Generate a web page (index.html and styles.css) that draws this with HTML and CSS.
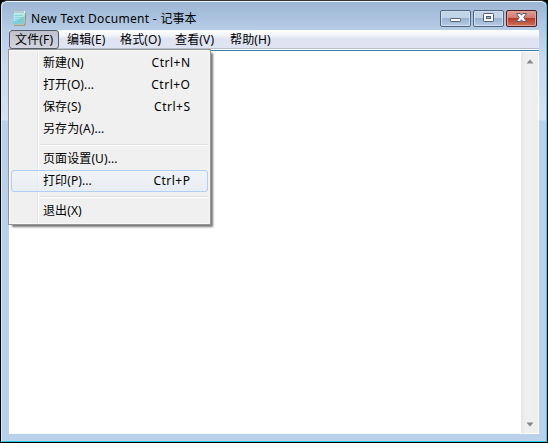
FILE: index.html
```
<!DOCTYPE html>
<html lang="zh-CN">
<head>
<meta charset="utf-8">
<title>New Text Document - 记事本</title>
<link rel="stylesheet" href="styles.css">
</head>
<body>
<main class="window">
  <header class="titlebar">
    <svg class="app-icon" width="15" height="16" viewBox="0 0 15 16">
      <path d="M3 3h11.2L13.5 15.5H2z" fill="#d9d2bd"/>
      <path d="M13.8 3L13 15.2H2" fill="none" stroke="#8a8370" stroke-width=".9"/>
      <path d="M2 2h11l-1 12H1z" fill="#7fcfd9"/>
      <path d="M2 2h11l-.4 4L1.5 12z" fill="#b5eaee"/>
      <path d="M3 5.5h8M3 7.5h8M2.5 9.5h8M2.5 11.5h8" stroke="#6fc3d0" stroke-width=".6"/>
      <path d="M2 2h11" stroke="#f5ffff" stroke-width="2"/>
      <path d="M3 1v2M5 1v2M7 1v2M9 1v2M11 1v2" stroke="#617e88" stroke-width=".8"/>
    </svg>
    <h1 class="title"><span class="title-en">New Text Document - </span>记事本</h1>
    <div class="controls">
      <span class="control"><svg width="29" height="15" viewBox="0 0 29 15"><rect x="9.5" y="8.5" width="10" height="3" rx=".7" fill="#fff" stroke="#525f74"/></svg></span>
      <span class="control"><svg width="29" height="15" viewBox="0 0 29 15"><rect x="9.5" y="3.5" width="10" height="8" rx=".7" fill="#fff" stroke="#525f74"/><rect x="12.5" y="6.5" width="4" height="2" fill="#9fb9d7" stroke="#525f74"/></svg></span>
      <span class="control close"><svg width="29" height="15" viewBox="0 0 29 15"><path d="M9.5 3.5h3.7l1.3 1.7 1.3-1.7h3.7L16.8 7.5l2.7 4h-3.7l-1.3-1.7-1.3 1.7H9.5l2.7-4z" fill="#fff" stroke="#595b6d" stroke-linejoin="round"/></svg></span>
    </div>
  </header>
  <section class="client">
    <nav class="menubar">
      <span class="menu-name open">文件(F)</span>
      <span class="menu-name">编辑(E)</span>
      <span class="menu-name">格式(O)</span>
      <span class="menu-name">查看(V)</span>
      <span class="menu-name">帮助(H)</span>
    </nav>
    <div class="editor">
      <div class="page"></div>
      <div class="scrollbar">
        <svg width="8" height="5" viewBox="0 0 8 5"><path d="M.5 4.5L4 .5l3.5 4z" fill="#858585"/></svg>
        <svg width="8" height="5" viewBox="0 0 8 5"><path d="M.5.5L4 4.5 7.5.5z" fill="#858585"/></svg>
      </div>
    </div>
    <div class="dropdown">
      <div class="item"><span>新建(N)</span><span class="key">Ctrl+N</span></div>
      <div class="item"><span>打开(O)...</span><span class="key">Ctrl+O</span></div>
      <div class="item"><span>保存(S)</span><span class="key">Ctrl+S</span></div>
      <div class="item"><span>另存为(A)...</span></div>
      <div class="separator"></div>
      <div class="item"><span>页面设置(U)...</span></div>
      <div class="item active"><span>打印(P)...</span><span class="key">Ctrl+P</span></div>
      <div class="separator"></div>
      <div class="item"><span>退出(X)</span></div>
    </div>
  </section>
</main>
</body>
</html>
```
FILE: styles.css
```
* { box-sizing: border-box; }
body {
  margin: 0;
  width: 548px;
  height: 443px;
  overflow: hidden;
  background: #000;
  font: 12px/16px "Noto Sans", "Noto Sans CJK SC", sans-serif;
  color: #000;
}
.window {
  width: 546px;
  height: 442px;
  margin-left: 1px;
  padding: 1px 7px 7px;
  border: solid;
  border-width: 1px;
  border-color: #34333a #35cbe3 #24ccdf #d8e9f7;
  border-radius: 6px 6px 0 0;
  background: linear-gradient(#9bb5d3 0, #b6cde7 30px, #c7d9ee 60px, #d3e3f4 119px, #b9d1ea 120px);
  box-shadow: inset 0 1px #edf5fb;
}
.titlebar {
  height: 28px;
  display: flex;
  align-items: flex-start;
  padding: 8px 0 0 3px;
}
.app-icon { flex: none; }
.title {
  flex: 1;
  margin: 0 0 0 4px;
  font-size: 12px;
  font-weight: 400;
  line-height: 17px;
  white-space: pre;
}
.title-en { letter-spacing: .3px; }
.controls { display: flex; gap: 2px; padding-right: 2px; }
.control {
  width: 31px;
  height: 17px;
  border: 1px solid #52657f;
  border-radius: 2px;
  background: linear-gradient(#c2d4e9 0 45%, #98b3d1 50%, #b6cce5);
  box-shadow: inset 0 0 0 1px #d0dfef;
}
.control svg { display: block; margin-top: -1px; }
.control.close {
  border-color: #501d24;
  background: linear-gradient(#dfa197 0, #d2796d 45%, #b83a27 50%, #d1735a);
  box-shadow: inset 0 0 0 1px #e0a198;
}
.client {
  position: relative;
  width: 530px;
  height: 404px;
  display: flex;
  flex-direction: column;
  background: #fff;
}
.menubar {
  height: 19px;
  display: flex;
  background: linear-gradient(#fff 0, #f3f5fb 5px, #dfe3f1 9px, #dfe4f3 18px, #b8bfce 18px);
}
.menu-name {
  width: 55px;
  height: 19px;
  padding-left: 8px;
  line-height: 20px;
  letter-spacing: .15px;
  white-space: nowrap;
}
.menu-name:nth-child(2) { width: 53px; }
.menu-name.open {
  width: 50px;
  padding-left: 5px;
  border: 1px solid #555b69;
  border-radius: 3px;
  background: linear-gradient(#bfc2cd, #d2d5df);
  line-height: 18px;
}
.editor {
  flex: 1;
  margin-top: 1px;
  display: flex;
  border-top: 1px solid #3b7fb2;
}
.page { flex: 1; }
.scrollbar {
  width: 17px;
  margin: 1px 1px 1px 0;
  padding: 7px 0 6px;
  display: flex;
  flex-direction: column;
  align-items: center;
  justify-content: space-between;
  background: linear-gradient(90deg, #e7e7e7, #f0f0f0 30%, #eee);
}
.dropdown {
  position: absolute;
  left: -1px;
  top: 19px;
  width: 203px;
  height: 176px;
  padding: 2px;
  border: 1px solid #959595;
  background: linear-gradient(90deg, transparent 28px, #e0e3e6 28px 29px, #fff 29px 30px, transparent 30px), #f0f0f0;
  box-shadow: inset 0 0 0 1px #f8f8f8, 3px 3px 2px -1px #777;
}
.item {
  height: 22px;
  display: flex;
  justify-content: space-between;
  padding: 0 18px 0 32px;
  line-height: 21px;
  letter-spacing: .1px;
  white-space: nowrap;
}
.key { letter-spacing: .5px; margin-right: -.5px; }
.item.active {
  border: 1px solid #aecff7;
  border-radius: 3px;
  padding: 0 17px 0 31px;
  background: linear-gradient(#f0f3f8b0, #e5edf6b0);
  line-height: 19px;
}
.separator {
  height: 2px;
  margin: 4px 0 2px 29px;
  border-top: 1px solid #dedede;
  border-bottom: 1px solid #fff;
}
```
